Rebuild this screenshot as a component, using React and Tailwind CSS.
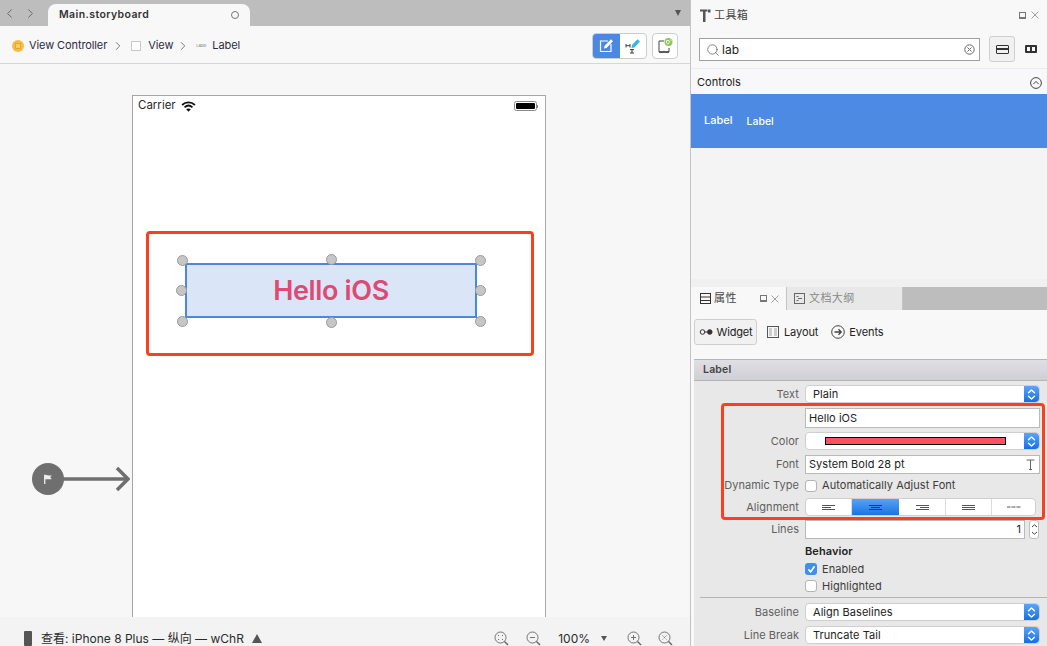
import React from "react";
import { ChevronLeft, ChevronRight, Search } from "lucide-react";

function Stepper() {
  return (
    <div className="w-[15px] self-stretch bg-gradient-to-b from-[#5aa5f7] to-[#0f6fe8] rounded-r-[4px] flex items-center justify-center">
      <svg width="9" height="13" viewBox="0 0 9 13" fill="none" stroke="#fff" strokeWidth="1.4" strokeLinecap="round" strokeLinejoin="round">
        <path d="M1.5 4.8 4.5 2l3 2.8" />
        <path d="M1.5 8.2 4.5 11l3-2.8" />
      </svg>
    </div>
  );
}

function Label({ children }) {
  return <div className="w-[105px] shrink-0 text-right text-[11px] tracking-[0.05px] text-[#5f5f5f] leading-none">{children}</div>;
}

function Popup({ children }) {
  return (
    <div className="h-full ml-[6px] w-[235px] bg-white rounded-[4px] border border-[#cfcfcf] flex items-stretch">
      <div className="flex-1 pl-[7px] text-[11px] tracking-[0.05px] text-[#222] flex items-center leading-none">{children}</div>
      <Stepper />
    </div>
  );
}

function Field({ children }) {
  return (
    <div className="h-full ml-[6px] w-[235px] bg-white border border-[#b9b9b9] flex items-center px-[3px] text-[11px] tracking-[0.05px] text-[#222] leading-none">
      {children}
    </div>
  );
}

function Check({ checked, children }) {
  return (
    <div className="flex items-center">
      <div className={checked ? "w-[12px] h-[12px] rounded-[3px] bg-[#3f8ef0] flex items-center justify-center" : "w-[12px] h-[12px] rounded-[3px] bg-white border border-[#b4b4b4]"}>
        {checked && (
          <svg width="9" height="9" viewBox="0 0 9 9" fill="none" stroke="#fff" strokeWidth="1.6" strokeLinecap="round" strokeLinejoin="round">
            <path d="M1.8 4.8 3.6 7 7.2 1.8" />
          </svg>
        )}
      </div>
      <span className="ml-[5px] text-[11px] tracking-[0.05px] text-[#3c3c3c] leading-none">{children}</span>
    </div>
  );
}

function Lines({ widths, color = "#555" }) {
  return (
    <svg width="15" height="7" viewBox="0 0 15 7" fill="none" stroke={color} strokeWidth="1">
      {widths.map(([x1, x2], i) => (
        <path key={i} d={`M${x1} ${i * 2 + 1.5}H${x2}`} />
      ))}
    </svg>
  );
}

function Handle({ className }) {
  return <div className={"absolute w-[11px] h-[11px] rounded-full bg-[#c6c6c6] border border-[#9b9b9b] " + className} />;
}

export default function App() {
  return (
    <div className="w-[1047px] h-[646px] flex overflow-hidden bg-white font-['Inter','Noto_Sans_CJK_SC',sans-serif] text-[#222]">
      {/* Left column */}
      <div className="w-[691px] shrink-0 h-full flex flex-col border-r border-[#c4c4c4]">
        {/* Tab bar */}
        <div className="h-[26px] shrink-0 bg-[#bdbdbd] flex items-end">
          <div className="flex items-center self-center gap-[6px] pl-[2px] text-[#444]">
            <ChevronLeft size={15} strokeWidth={1.1} />
            <ChevronRight size={15} strokeWidth={1.1} />
          </div>
          <div className="ml-[10px] w-[202px] h-[22px] bg-[#f8f8f8] rounded-t-[8px] flex items-center pl-[11px] pr-[11px] justify-between">
            <span className="text-[10.5px] font-semibold tracking-[0.4px] text-[#333]">Main.storyboard</span>
            <span className="w-[8px] h-[8px] rounded-full border-[1.5px] border-[#777]" />
          </div>
          <div className="ml-auto mr-[9px] self-center w-0 h-0 border-l-[3.5px] border-r-[3.5px] border-t-[6px] border-l-transparent border-r-transparent border-t-[#555]" />
        </div>
        {/* Breadcrumb */}
        <div className="h-[38px] shrink-0 bg-[#f8f8f8] border-b border-[#d6d6d6] flex items-center pt-[2px] pl-[12px] pr-[12px] text-[11px] tracking-[-0.1px] text-[#2b2b40]">
          <span className="w-[12px] h-[12px] rounded-full bg-[#f5bd45] flex items-center justify-center">
            <span className="w-[6px] h-[6px] border border-[#e6a72e] bg-[#f8cc6c]" />
          </span>
          <span className="ml-[5px]">View Controller</span>
          <ChevronRight size={14} strokeWidth={1} className="ml-[4px] text-[#222]" />
          <span className="ml-[6px] w-[10px] h-[10px] border border-[#c9c9c9] bg-white" />
          <span className="ml-[7px]">View</span>
          <ChevronRight size={14} strokeWidth={1} className="ml-[3px] text-[#222]" />
          <span className="ml-[6px] w-[10px] h-[5px] flex items-center text-[4px] text-[#777] leading-none">Label</span>
          <span className="ml-[6px]">Label</span>

          <div className="ml-auto flex items-center">
            <div className="flex h-[26px] w-[55px] rounded-[4px] border border-[#cdcdcd] overflow-hidden bg-white">
              <div className="w-[28px] -m-px mr-0 bg-[#4a88e2] flex items-center justify-center">
                <svg width="16" height="16" viewBox="0 0 16 16" fill="none" stroke="#fff" strokeWidth="1.2">
                  <path d="M10 3H2.500v10.500H13V6" />
                  <path d="M6 10.500 6.500 8 13 1.200 15 3.200 8.500 10z" fill="#fff" stroke="none" />
                </svg>
              </div>
              <div className="flex-1 flex items-center justify-center">
                <svg width="16" height="16" viewBox="0 0 16 16" fill="none">
                  <path d="M6.500 10 7 7 12.500 1.200 15 3.600 9.500 9.500z" fill="#36b7e0" />
                  <path d="M1 6v3.500M1 7.700H5M5 6v3.500" stroke="#444" strokeWidth="1" />
                  <path d="M5 11.500h4M5 15h4M7 11.500V15" stroke="#444" strokeWidth="1.200" />
                </svg>
              </div>
            </div>
            <div className="ml-[5px] w-[26px] h-[26px] rounded-[4px] border border-[#cdcdcd] bg-white flex items-center justify-center">
              <svg width="18" height="18" viewBox="0 0 18 18" fill="none">
                <path d="M8 4H3v11h10v-4" stroke="#444" strokeWidth="1" />
                <path d="M3 15h10" stroke="#444" strokeWidth="1.500" />
                <circle cx="12.500" cy="5" r="4" fill="#8ec85b" />
                <path d="M10.500 3.500h2.500l.5 1.500-1.500 2-1.500-1zM14 2.500l1.500 1" stroke="#fff" strokeWidth="0.800" />
              </svg>
            </div>
          </div>
        </div>
        {/* Canvas */}
        <div className="flex-1 min-h-0 bg-[#f7f7f7] overflow-hidden relative pl-[132px] pt-[31px]">
          <div className="w-[414px] h-[600px] bg-white border border-[#a6a6a6] relative">
            <div className="h-[20px] flex items-center pl-[5px] pr-[7px] text-[11.5px] text-[#2a2a2a] leading-none">
              <span>Carrier</span>
              <svg className="ml-[5px]" width="15" height="11" viewBox="0 0 14 10" fill="none" stroke="#111" strokeWidth="1.700">
                <path d="M1 3.600C4.500.4 9.500.4 13 3.600" />
                <path d="M3.300 5.800c2.200-2 5.200-2 7.400 0" />
                <path d="M7 9.800 4.800 7.600c1.300-1.100 3.100-1.100 4.400 0z" fill="#111" stroke="none" />
              </svg>
              <div className="ml-auto flex items-center">
                <div className="w-[23px] h-[10px] rounded-[2.5px] border border-[#8a8a8a] p-[1px] bg-white">
                  <div className="w-full h-full bg-black rounded-[1px]" />
                </div>
                <div className="w-[1px] h-[3px] bg-[#8a8a8a]" />
              </div>
            </div>

            {/* Selected label */}
            <div className="absolute left-[52px] top-[167px] w-[292px] h-[55px] bg-[#dae6f8] border-2 border-[#4a88e2] flex items-center justify-center">
              <span className="text-[27px] font-semibold text-[#dd4a72] leading-none tracking-[-0.35px]">Hello iOS</span>
            </div>
            <Handle className="left-[44px] top-[159px]" />
            <Handle className="left-[193px] top-[158px]" />
            <Handle className="left-[342px] top-[159px]" />
            <Handle className="left-[43px] top-[189px]" />
            <Handle className="left-[342px] top-[189px]" />
            <Handle className="left-[44px] top-[220px]" />
            <Handle className="left-[193px] top-[221px]" />
            <Handle className="left-[342px] top-[220px]" />
            {/* Annotation */}
            <div className="absolute left-[13px] top-[135px] w-[388px] h-[125px] rounded-[4px] border-[3px] border-[#f9401f]" />
          </div>

          {/* Entry arrow */}
          <div className="absolute left-[32px] top-[399px] flex items-center">
            <div className="w-[32px] h-[32px] rounded-full bg-[#6f6f6f] flex items-center justify-center">
              <svg width="12" height="12" viewBox="0 0 11 11">
                <path d="M2.500 1.500v8.500" stroke="#eee" strokeWidth="1.200" />
                <path d="M2.500 1.500c2 .2 3.500 1 6.500.8L7.500 4 9 5.500c-2.500.5-4.500 0-6.500.3z" fill="#eee" />
              </svg>
            </div>
            <svg width="67" height="26" viewBox="0 0 67 26" fill="none" stroke="#6f6f6f" strokeWidth="3.500" className="-ml-[1px]">
              <path d="M0 13H64" />
              <path d="M54 2 65 13 54 24" />
            </svg>
          </div>
        </div>
        {/* Bottom bar */}
        <div className="h-[29px] shrink-0 bg-[#f3f3f3] flex items-center pt-[14px] pl-[24px] pr-[17px] text-[12px] text-[#2b2b2b] leading-none">
          <div className="w-[8px] h-[15px] rounded-[1px] bg-[#555]" />
          <span className="ml-[9px]">查看: iPhone 8 Plus — 纵向 — wChR</span>
          <div className="ml-[8px] w-0 h-0 border-l-[5px] border-r-[5px] border-b-[9px] border-l-transparent border-r-transparent border-b-[#555]" />
          <div className="ml-auto flex items-center text-[#555]">
            <ZoomIcon kind="fit" />
            <ZoomIcon kind="minus" className="ml-[17px]" />
            <span className="ml-[17px] text-[12px] text-[#2b2b2b]">100%</span>
            <div className="ml-[11px] w-0 h-0 border-l-[3px] border-r-[3px] border-t-[5px] border-l-transparent border-r-transparent border-t-[#555]" />
            <ZoomIcon kind="plus" className="ml-[20px]" />
            <ZoomIcon kind="x" className="ml-[16px]" />
          </div>
        </div>
      </div>

      {/* Right column */}
      <div className="flex-1 min-w-0 h-full flex flex-col bg-[#f4f4f4]">
        {/* Toolbox */}
        <div className="h-[279px] shrink-0 flex flex-col bg-[#f4f4f4]">
          <div className="h-[30px] shrink-0 bg-[#f8f8f8] flex items-center pl-[9px] pr-[8px]">
            <svg width="11" height="13" viewBox="0 0 11 13" fill="#555">
              <path d="M0 .5h7.500v2H5.500V13H3V2.500H0z" />
              <path d="M8 .5h2.500v3H8z" />
            </svg>
            <span className="ml-[3px] text-[11px] tracking-[0.4px] text-[#444]">工具箱</span>
            <span className="ml-auto w-[7px] h-[7px] border border-[#777] border-b-2" />
            <svg className="ml-[5px]" width="8" height="8" viewBox="0 0 8 8" stroke="#888" strokeWidth="0.800"><path d="M.5.500l7 7M7.500.500l-7 7" /></svg>
          </div>
          <div className="h-[39px] shrink-0 bg-[#f8f8f8] border-b border-[#ececec] flex items-start pl-[8px] pr-[8px] pt-[6px]">
            <div className="mt-[2px] w-[281px] h-[23px] bg-white border border-[#a0a0a0] flex items-center pl-[6px] pr-[4px]">
              <Search size={14} strokeWidth={1.2} className="text-[#555]" />
              <span className="ml-[2px] text-[12px] text-[#222] leading-none">lab</span>
              <svg className="ml-auto" width="11" height="11" viewBox="0 0 11 11" fill="none" stroke="#666" strokeWidth="1">
                <circle cx="5.500" cy="5.500" r="4.700" />
                <path d="M3.500 3.500l4 4M7.500 3.500l-4 4" />
              </svg>
            </div>
            <div className="ml-[9px] w-[26px] h-[26px] rounded-[3px] bg-[#f1f1f1] border border-[#cfcfcf] flex items-center justify-center">
              <div className="w-[13px] h-[9px] rounded-[1px] border-[1.5px] border-[#333] flex flex-col justify-center"><div className="h-[1.5px] bg-[#333]" /></div>
            </div>
            <div className="ml-[10px] mt-[9px] w-[12px] h-[8px] rounded-[1px] border-2 border-[#333] flex justify-center"><div className="w-[2px] h-full bg-[#333]" /></div>
          </div>
          <div className="h-[25px] shrink-0 bg-[#f8f8fa] flex items-center pt-[2px] pl-[6px] pr-[5px] text-[11px] text-[#222] leading-none">
            <span>Controls</span>
            <svg className="ml-auto" width="12" height="12" viewBox="0 0 12 12" fill="none" stroke="#444" strokeWidth="1">
              <circle cx="6" cy="6" r="5.400" />
              <path d="M3.300 7.200 6 4.400l2.700 2.800" />
            </svg>
          </div>
          <div className="h-[54px] shrink-0 bg-[#4d8ae4] flex items-center pl-[13px] text-white text-[11px] font-medium leading-none">
            <span className="-mt-[2px]">Label</span>
            <span className="ml-[14px] text-[10.500px] mt-[3px]">Label</span>
          </div>
          <div className="flex-1 bg-[#f4f4f4]" />
        </div>
        <div className="h-[8px] shrink-0 bg-[#f0f0f0]" />

        {/* Inspector */}
        <div className="flex-1 min-h-0 flex flex-col bg-[#f8f8f8]">
          <div className="h-[23px] shrink-0 bg-[#bdbdbd] flex items-stretch">
            <div className="w-[95px] bg-[#f8f8f8] flex items-center pl-[9px] pr-[7px]">
              <svg width="11" height="11" viewBox="0 0 11 11" fill="none" stroke="#333" strokeWidth="1"><rect x=".5" y=".5" width="10" height="10" /><path d="M.5 4h10M.5 7.500h10" /></svg>
              <span className="ml-[3px] text-[11px] tracking-[0.4px] text-[#444]">属性</span>
              <span className="ml-auto w-[7px] h-[7px] border border-[#777] border-b-2" />
              <svg className="ml-[4px]" width="8" height="8" viewBox="0 0 8 8" stroke="#888" strokeWidth="0.800"><path d="M.5.500l7 7M7.500.500l-7 7" /></svg>
            </div>
            <div className="w-[117px] bg-[#e8e8e8] border-l border-r border-[#c4c4c4] flex items-center pl-[7px]">
              <svg width="11" height="11" viewBox="0 0 11 11" fill="none" stroke="#666" strokeWidth="1"><rect x=".5" y=".5" width="10" height="10" /><path d="M2.500 3.500h2M4 5.500h4M2.500 7.500h2" /></svg>
              <span className="ml-[4px] text-[11px] tracking-[0.4px] text-[#888]">文档大纲</span>
            </div>
          </div>
          <div className="h-[49px] shrink-0 bg-[#f8f8f8] flex items-start pl-[3px] pt-[9px] text-[11px] text-[#222] leading-none">
            <div className="h-[26px] w-[63px] rounded-[3px] bg-[#f1f1f1] border border-[#cfcfcf] flex items-center justify-center">
              <svg width="14" height="6" viewBox="0 0 13 6" fill="none" stroke="#333" strokeWidth="1"><circle cx="3" cy="3" r="2.300" /><path d="M5.300 3h3" /><rect x="8" y=".8" width="4.500" height="4.400" rx="2" fill="#333" /></svg>
              <span className="ml-[4px] tracking-[-0.2px]">Widget</span>
            </div>
            <div className="h-[26px] ml-[10px] flex items-center">
              <svg width="12" height="12" viewBox="0 0 12 12" fill="none" stroke="#555" strokeWidth="1"><rect x=".5" y=".5" width="11" height="11" /><rect x="2" y="2" width="3" height="8" fill="#ccc" stroke="none" /><rect x="7" y="2" width="3" height="8" fill="#ccc" stroke="none" /></svg>
              <span className="ml-[5px] tracking-[-0.1px]">Layout</span>
            </div>
            <div className="h-[26px] ml-[13px] flex items-center">
              <svg width="14" height="14" viewBox="0 0 14 14" fill="none" stroke="#444" strokeWidth="1"><circle cx="7" cy="7" r="6.300" /><path d="M3.500 7h6.500M7.500 4.300 10.200 7 7.500 9.700" strokeWidth="1.300" /></svg>
              <span className="ml-[4px] tracking-[-0.1px]">Events</span>
            </div>
          </div>

          <div className="flex-1 min-h-0 ml-[3px] bg-[#e8e8e8] relative">
            <div className="h-[22px] bg-gradient-to-b from-[#dfdfe4] to-[#cfcfd6] border-t border-b border-[#b5b5b5] flex items-center pt-[1px] pl-[9px] text-[10.500px] font-semibold text-[#444] tracking-[0.2px] leading-none">Label</div>

            <div className="flex flex-col">
              <Row top="mt-[4px]" h="h-[18px]" label="Text"><Popup>Plain</Popup></Row>
              <Row top="mt-[5px]" h="h-[20px]"><Field>Hello iOS</Field></Row>
              <Row top="mt-[4px]" h="h-[18px]" label="Color">
                <div className="h-full ml-[6px] w-[235px] bg-white rounded-[4px] border border-[#cfcfcf] flex items-stretch">
                  <div className="flex-1 flex items-center pl-[19px]"><div className="w-[181px] h-[8px] bg-[#fb5261] border border-black" /></div>
                  <Stepper />
                </div>
              </Row>
              <Row top="mt-[5px]" h="h-[19px]" label="Font">
                <Field>
                  <span>System Bold 28 pt</span>
                  <svg className="ml-auto mr-[1px]" width="9" height="11" viewBox="0 0 9 11" fill="none" stroke="#555" strokeWidth="0.900"><path d="M.5 1h8M4.500 1v10M3 10.500h3" /></svg>
                </Field>
              </Row>
              <Row top="mt-[3px]" h="h-[17px]" label="Dynamic Type">
                <div className="ml-[6px]"><Check>Automatically Adjust Font</Check></div>
              </Row>
              <Row top="mt-[4px]" h="h-[18px]" label="Alignment">
                <div className="h-full ml-[6px] w-[231px] bg-white rounded-[4px] border border-[#cfcfcf] flex overflow-hidden">
                  <Seg w="w-[46px]"><Lines widths={[[1, 14], [1, 10], [1, 14]]} /></Seg>
                  <Seg w="w-[47px]" active><Lines widths={[[1, 14], [3, 12], [1, 14]]} color="#333" /></Seg>
                  <Seg w="w-[47px]"><Lines widths={[[1, 14], [5, 14], [1, 14]]} /></Seg>
                  <Seg w="w-[46px]"><Lines widths={[[1, 14], [1, 14], [1, 14]]} /></Seg>
                  <div className="flex-1 flex items-center justify-center text-[11px] text-[#555]"><svg width="15" height="2" viewBox="0 0 15 2" stroke="#555"><path d="M1 1h3.500M5.500 1h4M10.500 1h4" /></svg></div>
                </div>
              </Row>
              <Row top="mt-[4px]" h="h-[19px]" label="Lines">
                <div className="h-full ml-[6px] w-[220px] bg-white border border-[#b9b9b9] flex items-center justify-end pr-[3px] text-[11px] text-[#222] leading-none">1</div>
                <div className="ml-[4px] w-[10px] h-[19px] rounded-[3px] bg-white border border-[#bdbdbd] flex items-center justify-center">
                  <svg width="7" height="13" viewBox="0 0 7 13" fill="none" stroke="#444" strokeWidth="1"><path d="M1 4 3.500 1.800 6 4M1 9l2.500 2.200L6 9" /></svg>
                </div>
              </Row>
              <div className="mt-[5px] ml-[111px] h-[14px] flex items-center text-[11px] font-semibold text-[#222] tracking-[0.1px] leading-none">Behavior</div>
              <div className="mt-[4px] ml-[111px] h-[14px] flex items-center"><Check checked>Enabled</Check></div>
              <div className="mt-[3px] ml-[111px] h-[14px] flex items-center"><Check>Highlighted</Check></div>
              <div className="mt-[4px] ml-[6px] mr-0 h-[1px] bg-[#b5b5b5]" />
              <Row top="mt-[5px]" h="h-[18px]" label="Baseline"><Popup>Align Baselines</Popup></Row>
              <Row top="mt-[5px]" h="h-[18px]" label="Line Break"><Popup>Truncate Tail</Popup></Row>
            </div>

            {/* Annotation */}
            <div className="absolute left-[27px] top-[44px] w-[324px] h-[117px] rounded-[4px] border-[3px] border-[#f9401f]" />
          </div>
        </div>
      </div>
    </div>
  );
}

function Seg({ w, active, children }) {
  return (
    <div className={w + " flex items-center justify-center border-r border-[#dcdcdc] " + (active ? "bg-gradient-to-b from-[#5aa5f7] to-[#0f6fe8] -my-px border-r-0" : "")}>
      {children}
    </div>
  );
}

function Row({ top, h, label, children }) {
  return (
    <div className={"flex items-center " + top + " " + h}>
      <Label>{label}</Label>
      {children}
    </div>
  );
}

function ZoomIcon({ kind, className = "" }) {
  return (
    <svg className={className} width="15" height="15" viewBox="0 0 15 15" fill="none" stroke="#666" strokeWidth="0.900">
      <circle cx="6.500" cy="6.500" r="5.500" />
      <path d="M10.500 10.500 14 14" strokeWidth="1.400" />
      {kind === "minus" && <path d="M4 6.500h5" />}
      {kind === "plus" && <path d="M4 6.500h5M6.500 4v5" />}
      {kind === "x" && <path d="M4.500 4.500l4 4M8.500 4.500l-4 4" strokeDasharray="1.500 1" />}
      {kind === "fit" && <path d="M4 4.500h1M8 4.500h1M4 8.500h1M8 8.500h1" />}
    </svg>
  );
}
